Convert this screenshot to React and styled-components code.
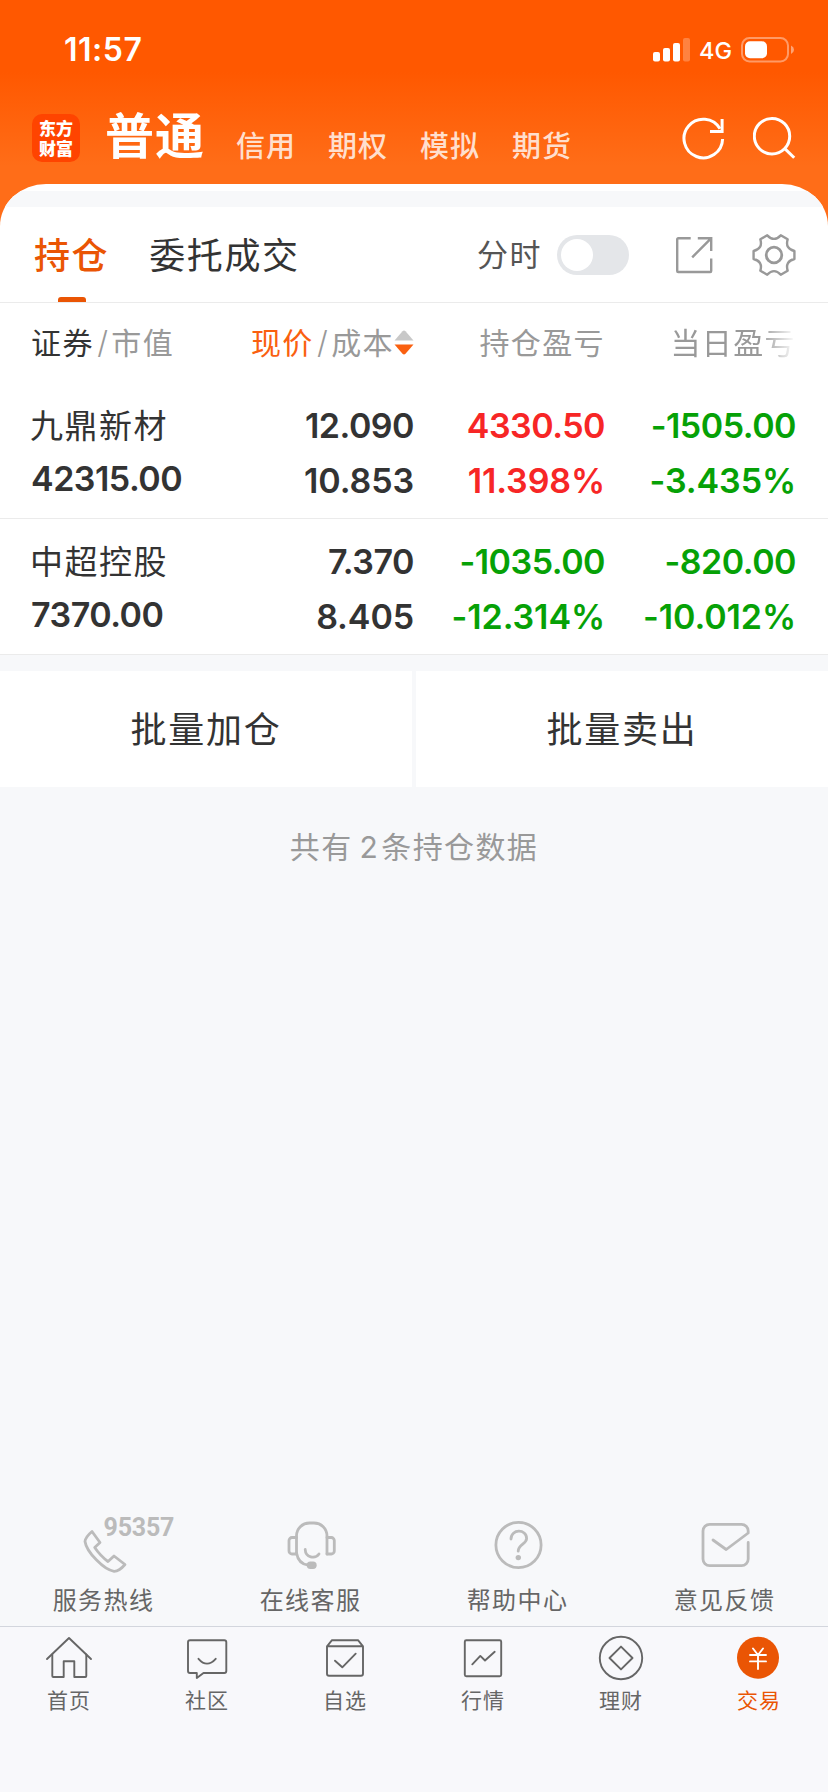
import React from "react";
import styled, { createGlobalStyle } from "styled-components";

const GlobalStyle = createGlobalStyle`
  * {
    box-sizing: border-box;
  }
  body {
    margin: 0;
    background: #f7f8fa;
    font-family: Inter, "Noto Sans CJK SC", sans-serif;
    color: #333;
  }
  svg {
    display: block;
    flex: none;
  }
`;

const Page = styled.div`
  display: flex;
  flex-direction: column;
  width: 828px;
  height: 1792px;
  overflow: hidden;
  background: #f7f8fa;
`;

const Top = styled.div`
  background: linear-gradient(#ff5800 0, #ff5800 72px, #ff6d18 166px, #ff6d18 100%);
`;

const StatusBar = styled.div`
  display: flex;
  align-items: center;
  height: 100px;
  padding: 0 33px 0 64px;
  color: #fff;
`;

const Time = styled.div`
  font-size: 32px;
  font-weight: 600;
  line-height: 40px;
  letter-spacing: 0.5px;
  margin-right: auto;
`;

const Network = styled.div`
  font-size: 23.5px;
  font-weight: 500;
  line-height: 30px;
  margin: 2px 9px 0 8px;
`;

const NavBar = styled.div`
  display: flex;
  align-items: flex-start;
  height: 84px;
  padding: 0 32px;
  color: #fff;
`;

const Logo = styled.div`
  width: 48px;
  height: 48px;
  margin-top: 14px;
  padding: 4px 0 0 7px;
  border-radius: 10px;
  background: #ff4400;
  font-family: "Noto Sans CJK SC", sans-serif;
  font-size: 17px;
  font-weight: 900;
`;

const LogoLine = styled.div`
  height: 19.5px;
  line-height: 19.5px;
`;

const Account = styled.div`
  margin: 1px 0 0 25px;
  font-size: 49px;
  font-weight: 700;
  line-height: 72px;
  letter-spacing: 1px;
  white-space: nowrap;
`;

const Markets = styled.div`
  display: flex;
  gap: 32px;
  margin: 27px 0 0 31px;
  font-size: 29px;
  font-weight: 500;
  line-height: 40px;
  letter-spacing: 1px;
  color: #ffdfcd;
`;

const NavIcons = styled.div`
  display: flex;
  gap: 28px;
  margin: 17px 0 0 auto;
`;

const Sheet = styled.div`
  padding-top: 7px;
  border-radius: 46px 46px 0 0 / 42px 42px 0 0;
  background: #fff;
  overflow: hidden;
`;

const Strip = styled.div`
  height: 16px;
  background: #f7f8fa;
`;

const Tabs = styled.div`
  display: flex;
  align-items: center;
  height: 96px;
  padding: 0 32px 0 34px;
  border-bottom: 1px solid #ebebeb;
`;

const Tab = styled.div`
  display: flex;
  flex-direction: column;
  align-items: center;
  justify-content: space-between;
  height: 95px;
  padding-top: 22px;
  margin-right: 40px;
  font-size: 36px;
  font-weight: ${({ $active }) => ($active ? 500 : 400)};
  line-height: 54px;
  letter-spacing: 1.6px;
  color: ${({ $active }) => ($active ? "#ea5504" : "#333")};

  &::after {
    content: "";
    width: 28px;
    height: 5px;
    border-radius: 3px 3px 0 0;
    background: ${({ $active }) => ($active ? "#ea5504" : "transparent")};
  }
`;

const Tools = styled.div`
  display: flex;
  align-items: center;
  margin-left: auto;
`;

const ToolLabel = styled.div`
  font-size: 31px;
  line-height: 44px;
  letter-spacing: 1.5px;
  color: #555;
  margin: 1px 15px 0 0;
`;

const Switch = styled.div`
  width: 72px;
  height: 40px;
  padding: 4px;
  border-radius: 20px;
  background: #e4e6e9;

  &::after {
    content: "";
    display: block;
    width: 32px;
    height: 32px;
    border-radius: 50%;
    background: #fff;
  }
`;

const ToolIcons = styled.div`
  display: flex;
  align-items: center;
  gap: 38px;
  margin-left: 45px;
`;

const Grid = styled.div`
  display: grid;
  grid-template-columns: 222px 161px 191px 191px;
  padding: 0 32px 0 31px;
`;

const HeadRow = styled(Grid)`
  height: 79px;
  align-items: center;
  font-size: 30px;
  line-height: 44px;
  letter-spacing: 1.4px;
  color: #999;
`;

const HeadCell = styled.div`
  display: flex;
  align-items: center;
  justify-content: ${({ $left }) => ($left ? "flex-start" : "flex-end")};
  white-space: nowrap;
`;

const FadeCell = styled(HeadCell)`
  mask-image: linear-gradient(90deg, #000 calc(100% - 36px), transparent 100%);
`;

const Primary = styled.span`
  color: ${({ $color }) => $color};
`;

const Slash = styled.span`
  flex: none;
  width: 17.5px;
  text-align: center;
  font-size: 31px;
  font-weight: 300;
  letter-spacing: 0;
`;

const StockRow = styled(Grid)`
  height: 136px;
  padding-top: 15px;
  border-bottom: 1px solid #ebebeb;
`;

const StockList = styled.div`
  padding-top: 1px;
`;

const Cell = styled.div`
  text-align: ${({ $left }) => ($left ? "left" : "right")};
  font-size: 34px;
  font-weight: 600;
  line-height: 55px;
  letter-spacing: -0.5px;
  color: ${({ $color }) => $color || "#333"};
`;

const Percent = styled.div`
  letter-spacing: -0.1px;
`;

const StockName = styled.div`
  padding-top: 2px;
  margin: 0 0 -1px -1px;
  font-size: 33px;
  font-weight: 400;
  line-height: 52px;
  letter-spacing: 1.5px;
`;

const Actions = styled.div`
  display: flex;
  gap: 4px;
  margin-top: 16px;
`;

const Action = styled.div`
  flex: 1;
  height: 116px;
  background: #fff;
  font-size: 36px;
  line-height: 118px;
  letter-spacing: 1.8px;
  text-align: center;
`;

const Total = styled.div`
  margin-top: 38px;
  font-size: 30px;
  line-height: 44px;
  letter-spacing: 1.4px;
  text-align: center;
  color: #999;
`;

const Count = styled.span`
  margin: 0 2px 0 7px;
`;

const Services = styled.div`
  display: flex;
  margin-top: auto;
  height: 112px;
`;

const Service = styled.div`
  flex: 1;
  display: flex;
  flex-direction: column;
  align-items: center;
  font-size: 24px;
  line-height: 42px;
  letter-spacing: 1.4px;
  color: #666;
`;

const Hotline = styled.div`
  position: relative;
`;

const HotlineNumber = styled.span`
  position: absolute;
  left: 50px;
  top: 0;
  font-family: Roboto, sans-serif;
  font-size: 25px;
  font-weight: 700;
  line-height: 28px;
  letter-spacing: -0.2px;
  color: #bbb;
`;

const TabBar = styled.div`
  display: flex;
  height: 166px;
  padding-top: 7px;
  border-top: 1px solid #d3d6dd;
  background: #f8f8fb;
`;

const TabItem = styled.div`
  flex: 1;
  display: flex;
  flex-direction: column;
  align-items: center;
  font-size: 21px;
  line-height: 37px;
  letter-spacing: 1px;
  color: ${({ $active }) => ($active ? "#ea5504" : "#666")};
`;

const RED = "#f72626";
const GREEN = "#06a106";

const stocks = [
  {
    name: "九鼎新材",
    value: "42315.00",
    price: ["12.090", "10.853"],
    total: ["4330.50", "11.398%", RED],
    day: ["-1505.00", "-3.435%", GREEN],
  },
  {
    name: "中超控股",
    value: "7370.00",
    price: ["7.370", "8.405"],
    total: ["-1035.00", "-12.314%", GREEN],
    day: ["-820.00", "-10.012%", GREEN],
  },
];

const Signal = () => (
  <svg width="38" height="24" viewBox="0 0 38 24" fill="#fff">
    <rect x="0" y="14" width="7" height="9.5" rx="2" />
    <rect x="10" y="10" width="7" height="13.5" rx="2" />
    <rect x="20" y="5" width="7" height="18.5" rx="2" />
    <rect x="30" y="0" width="7" height="23.5" rx="2" opacity="0.25" />
  </svg>
);

const Battery = () => (
  <svg width="54" height="26" viewBox="0 0 54 26">
    <rect x="1" y="1" width="46" height="23.5" rx="7.5" fill="none" stroke="#fff" strokeWidth="2" opacity="0.4" />
    <rect x="4" y="4.3" width="22" height="17" rx="5" fill="#fff" />
    <path d="M50 8.5Q53 10 53 12.8Q53 15.6 50 17Z" fill="#fff" opacity="0.45" />
  </svg>
);

const RefreshIcon = () => (
  <svg width="43" height="43" viewBox="0 0 43 43" fill="none" stroke="#fff" strokeWidth="3">
    <path d="M40.6 22A19.3 19.3 0 1 1 38 11.8" />
    <path d="M40.1 2V14.6H28" />
  </svg>
);

const SearchIcon = () => (
  <svg width="43" height="43" viewBox="0 0 43 43" fill="none" stroke="#fff" strokeWidth="3">
    <circle cx="19" cy="19.2" r="17.7" />
    <path d="M31.8 31.6L41.2 40.8" />
  </svg>
);

const ShareIcon = () => (
  <svg width="40" height="40" viewBox="0 0 40 40" fill="none" stroke="#999" strokeWidth="2.4">
    <path d="M16.7 3.2H4.2a1 1 0 0 0-1 1V36a1 1 0 0 0 1 1H36.2a1 1 0 0 0 1-1V23.5" />
    <path d="M23.8 3.2H37.2V16M18.2 22.3L36.8 3.6" />
  </svg>
);

const polar = (deg, r) => {
  const a = (deg * Math.PI) / 180;
  return `${(22 + r * Math.cos(a)).toFixed(2)} ${(22 + r * Math.sin(a)).toFixed(2)}`;
};

// six flat teeth joined by concave curves
const gearPath =
  [0, 60, 120, 180, 240, 300]
    .map(
      (d, i) =>
        `${i ? "L" : "M"}${polar(d - 11, 20.8)}L${polar(d + 11, 20.8)}Q${polar(d + 30, 12.6)} ${polar(d + 49, 20.8)}`
    )
    .join("") + "Z";

const GearIcon = () => (
  <svg width="44" height="44" viewBox="0 0 44 44" fill="none" stroke="#999" strokeWidth="2.4" strokeLinejoin="round">
    <path d={gearPath} />
    <circle cx="22" cy="22" r="7.8" strokeWidth="2.8" />
  </svg>
);

const SortIcon = () => (
  <svg width="20" height="26" viewBox="0 0 20 26">
    <path d="M0.5 10.5L8.5 1.2Q10 0 11.5 1.2L19.5 10.5Z" fill="#c8c8c8" />
    <path d="M0.5 14.5L8.5 23.8Q10 25 11.5 23.8L19.5 14.5Z" fill="#fa6010" />
  </svg>
);

const ServiceSvg = ({ children }) => (
  <svg
    width="100"
    height="66"
    viewBox="0 0 100 66"
    fill="none"
    stroke="#bbb"
    strokeWidth="2.8"
    strokeLinecap="round"
    strokeLinejoin="round"
  >
    {children}
  </svg>
);

const services = [
  {
    label: "服务热线",
    hotline: "95357",
    icon: (
      <path d="M38 17.5L46 28.5L40.7 33.5Q46.5 42 54 47.5L60 42L71 50.5Q65 57.5 60 57.3C50 56 32.5 38 31 27.5Q31.5 23 38 17.5Z" />
    ),
  },
  {
    label: "在线客服",
    icon: (
      <>
        <path d="M35.5 39V22A13 13 0 0 1 48.5 9H53A13 13 0 0 1 66 22V40" />
        <path d="M35.5 23.5H31a3 3 0 0 0-3 3V37a3 3 0 0 0 3 3H35.5" />
        <path d="M66 23.5H70.3a3 3 0 0 1 3 3V37a3 3 0 0 1-3 3H66" />
        <path d="M35.5 39Q37.5 50 47 51" />
        <path d="M44.2 35.5C44.5 43.5 54 45.5 58 40" />
        <rect x="45.7" y="47.5" width="10" height="7.5" rx="3.7" fill="#bbb" stroke="none" />
      </>
    ),
  },
  {
    label: "帮助中心",
    icon: (
      <>
        <circle cx="50.5" cy="31" r="22.6" />
        <path d="M43 25C43 14.7 58.6 14.7 58.6 24.5C58.6 30 50.2 30.5 50.2 37.2" />
        <circle cx="50.3" cy="43.6" r="2.7" fill="#bbb" stroke="none" />
      </>
    ),
  },
  {
    label: "意见反馈",
    icon: (
      <path d="M73.2 28.5V45a6.7 6.7 0 0 1-6.7 6.7H34.7a6.7 6.7 0 0 1-6.7-6.7V17a6.7 6.7 0 0 1 6.7-6.7H66.5a6.7 6.7 0 0 1 6.7 6.7V19L51.2 35.5L38 26" />
    ),
  },
];

const TabSvg = ({ children }) => (
  <svg
    width="48"
    height="48"
    viewBox="0 0 48 48"
    fill="none"
    stroke="#666"
    strokeWidth="1.9"
    strokeLinecap="round"
    strokeLinejoin="round"
  >
    {children}
  </svg>
);

const tabs = [
  {
    label: "首页",
    icon: (
      <>
        <path d="M2 25L24 4L46 25" />
        <path d="M7.3 20.5V42a1 1 0 0 0 1 1H18.7V27.2H29.3V43H40.3a1 1 0 0 0 1-1V20.5" />
      </>
    ),
  },
  {
    label: "社区",
    icon: (
      <>
        <path d="M7 6.2H41.3a2 2 0 0 1 2 2V37a2 2 0 0 1-2 2H20.5L13.8 44V39H7a2 2 0 0 1-2-2V8.2a2 2 0 0 1 2-2Z" />
        <path d="M15.5 24.8Q24 34.5 32.7 24.8" />
      </>
    ),
  },
  {
    label: "自选",
    icon: (
      <>
        <path d="M6 12.3H42V39.7a2 2 0 0 1-2 2H8a2 2 0 0 1-2-2ZM6 12.3L11 6.2H37L42 12.3" />
        <path d="M14 26.7L21.3 33.3L34.7 19.7" />
      </>
    ),
  },
  {
    label: "行情",
    icon: (
      <>
        <rect x="5.8" y="6.2" width="36.4" height="36.1" rx="1.5" />
        <path d="M13.3 30.3L21.3 21.9L26 26.5L35.7 17.8" />
      </>
    ),
  },
  {
    label: "理财",
    icon: (
      <>
        <circle cx="24" cy="24" r="21.2" />
        <path d="M24 12.6L35.5 24L24 35.4L12.5 24Z" />
      </>
    ),
  },
  {
    label: "交易",
    active: true,
    icon: (
      <>
        <circle cx="23" cy="23.7" r="21" fill="#ea5504" stroke="none" />
        <path d="M18 14.5L23 21L28 14.5M23 21V35M15 21H31M15 27.4H31" stroke="#fff" />
      </>
    ),
  },
];

const App = () => {
  return (
    <Page>
      <GlobalStyle />
      <Top>
        <StatusBar>
          <Time>11:57</Time>
          <Signal />
          <Network>4G</Network>
          <Battery />
        </StatusBar>
        <NavBar>
          <Logo>
            <LogoLine>东方</LogoLine>
            <LogoLine>财富</LogoLine>
          </Logo>
          <Account>普通</Account>
          <Markets>
            {["信用", "期权", "模拟", "期货"].map((m) => (
              <span key={m}>{m}</span>
            ))}
          </Markets>
          <NavIcons>
            <RefreshIcon />
            <SearchIcon />
          </NavIcons>
        </NavBar>
        <Sheet>
          <Strip />
          <Tabs>
            <Tab $active>持仓</Tab>
            <Tab>委托成交</Tab>
            <Tools>
              <ToolLabel>分时</ToolLabel>
              <Switch />
              <ToolIcons>
                <ShareIcon />
                <GearIcon />
              </ToolIcons>
            </Tools>
          </Tabs>
          <HeadRow>
            <HeadCell $left>
              <Primary $color="#333">证券</Primary>
              <Slash>/</Slash>
              <span>市值</span>
            </HeadCell>
            <HeadCell>
              <Primary $color="#fa6010">现价</Primary>
              <Slash>/</Slash>
              <span>成本</span>
              <SortIcon />
            </HeadCell>
            <HeadCell>持仓盈亏</HeadCell>
            <FadeCell>当日盈亏</FadeCell>
          </HeadRow>
          <StockList>
            {stocks.map((s) => (
              <StockRow key={s.name}>
                <Cell $left>
                  <StockName>{s.name}</StockName>
                  {s.value}
                </Cell>
                {[s.price, s.total, s.day].map(([a, b, color]) => (
                  <Cell key={a} $color={color}>
                    <div>{a}</div>
                    <Percent>{b}</Percent>
                  </Cell>
                ))}
              </StockRow>
            ))}
          </StockList>
        </Sheet>
      </Top>
      <Actions>
        <Action>批量加仓</Action>
        <Action>批量卖出</Action>
      </Actions>
      <Total>
        共有<Count>2</Count>条持仓数据
      </Total>
      <Services>
        {services.map((s) => (
          <Service key={s.label}>
            <Hotline>
              <ServiceSvg>{s.icon}</ServiceSvg>
              {s.hotline && <HotlineNumber>{s.hotline}</HotlineNumber>}
            </Hotline>
            {s.label}
          </Service>
        ))}
      </Services>
      <TabBar>
        {tabs.map((t) => (
          <TabItem key={t.label} $active={t.active}>
            <TabSvg>{t.icon}</TabSvg>
            {t.label}
          </TabItem>
        ))}
      </TabBar>
    </Page>
  );
};

export default App;
